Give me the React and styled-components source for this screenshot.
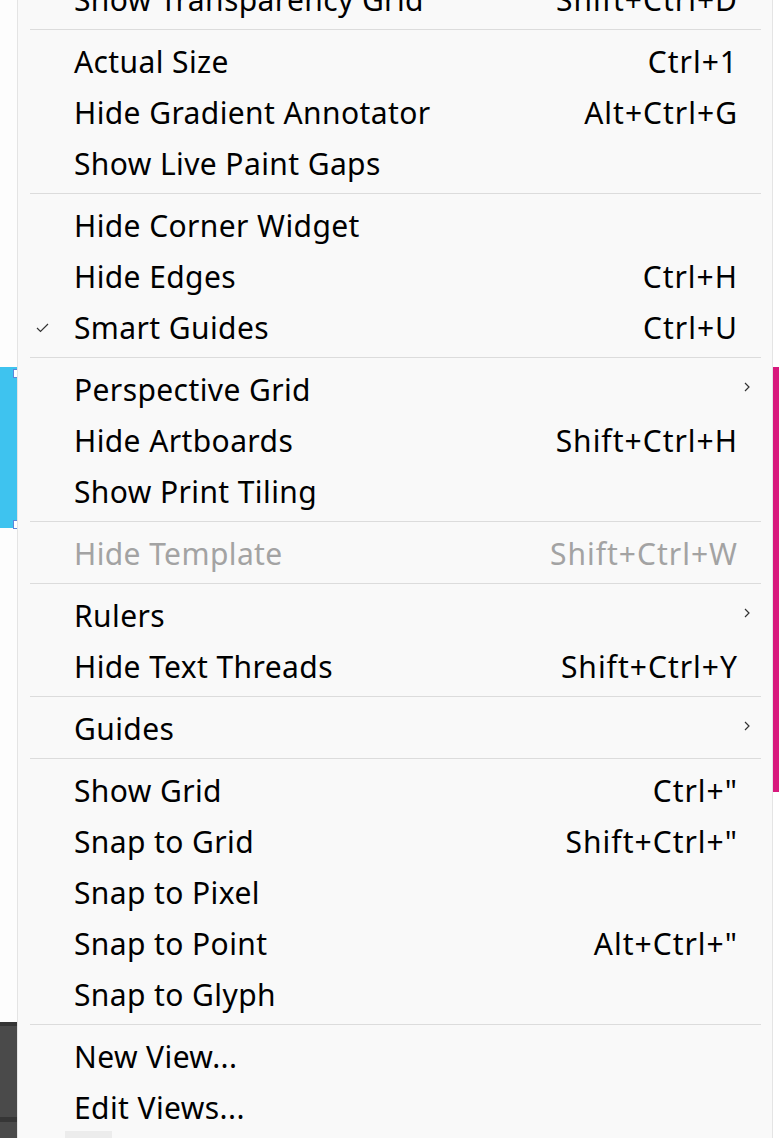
import React from 'react';
import styled, { createGlobalStyle } from 'styled-components';

const GlobalStyle = createGlobalStyle`
  html, body {
    margin: 0;
    padding: 0;
    background: #ffffff;
    overflow: hidden;
  }
  body {
    width: 779px;
    height: 1138px;
    font-family: "Noto Sans", "Open Sans", sans-serif;
  }
`;

const Page = styled.div`
  display: grid;
  grid-template-columns: 17px 1px 754px 1px 6px;
  width: 779px;
  height: 1138px;
  overflow: hidden;
`;

const Strip = styled.div`
  display: flex;
  flex-direction: column;
  position: relative;
`;

const Band = styled.div`
  height: ${(p) => (p.h ? `${p.h}px` : 'auto')};
  flex: ${(p) => (p.h ? 'none' : '1')};
  background: ${(p) => p.color || '#fdfdfd'};
`;

const DarkBand = styled.div`
  flex: 1;
  background: #4a4a4a;
  border-top: 4px solid #353535;
  position: relative;
`;

const DarkLine = styled.div`
  height: 5px;
  margin-top: 91px;
  background: #363636;
`;

const Handle = styled.div`
  position: absolute;
  left: 13px;
  top: ${(p) => p.top}px;
  width: 4px;
  height: 9px;
  background: #ffffff;
  border: 1px solid #5d86d8;
  border-right: none;
  box-sizing: border-box;
`;

const Border = styled.div`
  background: #e4e4e4;
`;

const Menu = styled.div`
  background: #f9f9f9;
  margin-top: -26px;
  display: flex;
  flex-direction: column;
  color: #000;
  font-size: 30px;
  position: relative;
`;

const Row = styled.div`
  height: 51px;
  flex: none;
  display: grid;
  grid-template-columns: 56px 1fr auto 35px;
  align-items: center;
  color: ${(p) => (p.disabled ? '#a3a3a3' : '#000')};
  white-space: nowrap;
`;

const CheckCell = styled.div`
  display: flex;
  justify-content: center;
  align-items: center;
  padding-right: 8px;
  box-sizing: border-box;
  height: 100%;
`;

const Label = styled.span`
  line-height: 1;
  letter-spacing: 0.4px;
`;

const Shortcut = styled.span`
  line-height: 1;
  text-align: right;
  letter-spacing: 1px;
  margin-right: -1px;
`;

const ArrowCell = styled.div`
  display: flex;
  align-items: center;
  justify-content: flex-start;
  padding-left: 7px;
  height: 100%;
  margin-top: -5px;
`;

const Separator = styled.div`
  height: 1px;
  background: #dcdcdc;
  margin: 4px 11px 6px 12px;
  flex: none;
`;

const ScrollStub = styled.div`
  position: absolute;
  left: 47px;
  bottom: -25px;
  width: 47px;
  height: 32px;
  background: #ececec;
`;

const Check = () => (
  <svg width="13" height="10" viewBox="0 0 13 10">
    <polyline points="1,5 4.5,8.5 12,1" fill="none" stroke="#333" strokeWidth="1.2" />
  </svg>
);

const Chevron = () => (
  <svg width="6" height="10" viewBox="0 0 6 10">
    <polyline points="1,1 5,5 1,9" fill="none" stroke="#333" strokeWidth="1.2" />
  </svg>
);

const groups = [
  [{ label: 'Show Transparency Grid', key: 'Shift+Ctrl+D' }],
  [
    { label: 'Actual Size', key: 'Ctrl+1' },
    { label: 'Hide Gradient Annotator', key: 'Alt+Ctrl+G' },
    { label: 'Show Live Paint Gaps' },
  ],
  [
    { label: 'Hide Corner Widget' },
    { label: 'Hide Edges', key: 'Ctrl+H' },
    { label: 'Smart Guides', key: 'Ctrl+U', checked: true },
  ],
  [
    { label: 'Perspective Grid', sub: true },
    { label: 'Hide Artboards', key: 'Shift+Ctrl+H' },
    { label: 'Show Print Tiling' },
  ],
  [{ label: 'Hide Template', key: 'Shift+Ctrl+W', disabled: true }],
  [
    { label: 'Rulers', sub: true },
    { label: 'Hide Text Threads', key: 'Shift+Ctrl+Y' },
  ],
  [{ label: 'Guides', sub: true }],
  [
    { label: 'Show Grid', key: 'Ctrl+"' },
    { label: 'Snap to Grid', key: 'Shift+Ctrl+"' },
    { label: 'Snap to Pixel' },
    { label: 'Snap to Point', key: 'Alt+Ctrl+"' },
    { label: 'Snap to Glyph' },
  ],
  [{ label: 'New View...' }, { label: 'Edit Views...' }],
];

export default function App() {
  return (
    <>
      <GlobalStyle />
      <Page>
        <Strip>
          <Band h={367} />
          <Band h={161} color="#3ec3ef" />
          <Band h={494} />
          <DarkBand>
            <DarkLine />
          </DarkBand>
          <Handle top={369} />
          <Handle top={520} />
        </Strip>
        <Border />
        <Menu>
          {groups.map((items, gi) => (
            <React.Fragment key={gi}>
              {gi > 0 && <Separator />}
              {items.map((it) => (
                <Row key={it.label} disabled={it.disabled}>
                  <CheckCell>{it.checked && <Check />}</CheckCell>
                  <Label>{it.label}</Label>
                  <Shortcut>{it.key || ''}</Shortcut>
                  <ArrowCell>{it.sub && <Chevron />}</ArrowCell>
                </Row>
              ))}
            </React.Fragment>
          ))}
          <ScrollStub />
        </Menu>
        <Border />
        <Strip>
          <Band h={367} color="#ffffff" />
          <Band h={425} color="#d8197d" />
          <Band color="#ffffff" />
        </Strip>
      </Page>
    </>
  );
}
